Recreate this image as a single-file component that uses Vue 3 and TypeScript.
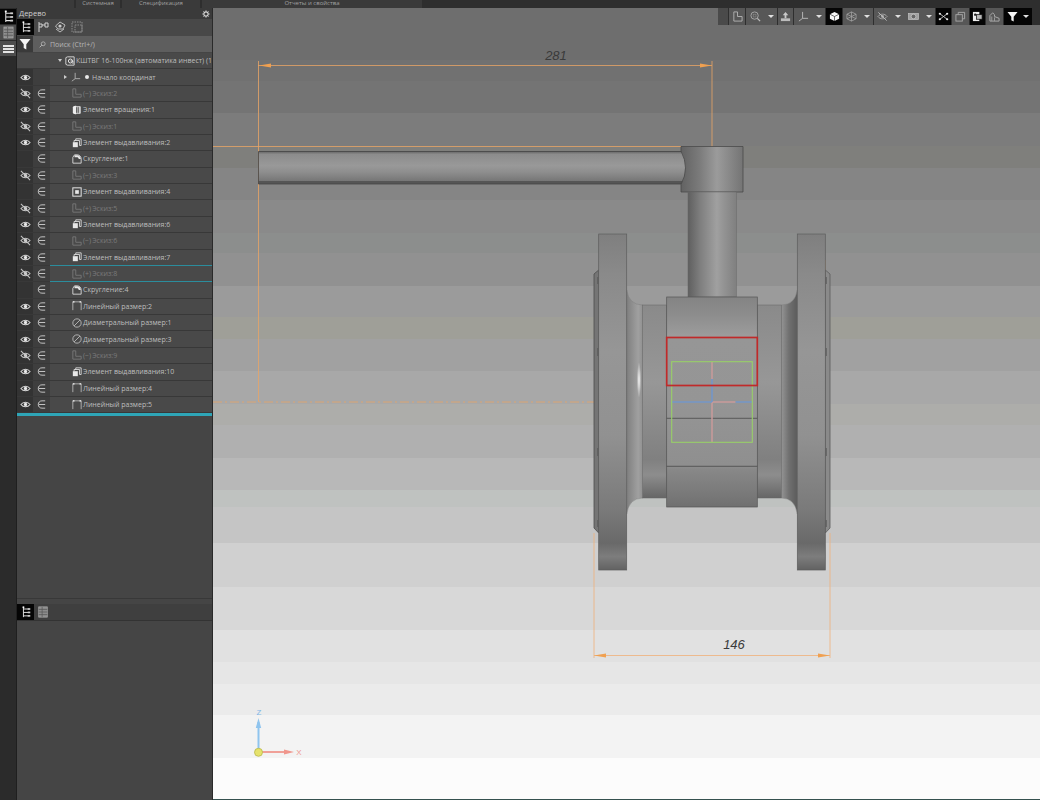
<template>
  <div class="app">
    <!-- общие иконки -->
    <svg class="defs" width="0" height="0">
      <defs>
        <symbol id="i-eye" viewBox="0 0 12 12">
          <path d="M1 6c2.5-3.4 7.500-3.400 10 0c-2.500 3.400-7.500 3.400-10 0z" fill="none" stroke="#d8d8d8" stroke-width="1.1" />
          <circle cx="6" cy="6" r="1.8" fill="#e8e8e8" />
        </symbol>
        <symbol id="i-hidden" viewBox="0 0 12 12">
          <path d="M1 6c2.5-3.4 7.500-3.400 10 0c-2.500 3.400-7.500 3.400-10 0z" fill="none" stroke="#c8c8c8" stroke-width="1.1" />
          <circle cx="6" cy="6" r="1.8" fill="#d0d0d0" />
          <path d="M1 1l10 10" stroke="#c8c8c8" stroke-width="1.1" />
        </symbol>
        <symbol id="i-elem" viewBox="0 0 12 12">
          <path d="M10 2H6.5C4 2 2.5 3.800 2.5 6s1.500 4 4 4H10M3 6h7" fill="none" stroke="#cfcfcf" stroke-width="1" />
        </symbol>
        <symbol id="i-sketch" viewBox="0 0 12 12">
          <path d="M1 1h3.5v6.500H11V11H1z" fill="none" stroke="#7c7c7c" stroke-width="1" />
        </symbol>
        <symbol id="i-extrude" viewBox="0 0 12 12">
          <path d="M4.5 3V1h6.500v8H9" fill="none" stroke="#e4e4e4" stroke-width="1" />
          <path d="M2.5 5V3h6.500v6" fill="none" stroke="#e4e4e4" stroke-width="1" />
          <rect x="1" y="5" width="6" height="6" fill="#e8e8e8" />
        </symbol>
        <symbol id="i-extrude-in" viewBox="0 0 12 12">
          <rect x="1" y="1" width="10" height="10" fill="none" stroke="#e4e4e4" stroke-width="1.2" />
          <rect x="3.8" y="3.8" width="4.4" height="4.4" fill="#e8e8e8" />
        </symbol>
        <symbol id="i-rotate" viewBox="0 0 12 12">
          <path d="M2 2h8v8H2z" fill="none" stroke="#e4e4e4" stroke-width="1" />
          <path d="M1 3c1-2 3-2 4-2v10c-1 0-3 0-4-2z" fill="#eee" />
          <path d="M7 2v8M9 2v8" stroke="#e4e4e4" stroke-width="1" />
        </symbol>
        <symbol id="i-round" viewBox="0 0 12 12">
          <path d="M1 11V4l2-3h3c3 0 5 2 5 5v5z" fill="none" stroke="#e4e4e4" stroke-width="1" />
          <path d="M3 1.5h3c2.500 0 4.500 2 4.500 4.500H8C8 4.800 7 4 6 4H3z" fill="#e8e8e8" />
        </symbol>
        <symbol id="i-linear" viewBox="0 0 12 12">
          <path d="M1 11V1h10v10" fill="none" stroke="#bdbdbd" stroke-width="1" />
          <path d="M1 1h2M9 1h2" stroke="#f0f0f0" stroke-width="1.6" />
        </symbol>
        <symbol id="i-diam" viewBox="0 0 12 12">
          <circle cx="6" cy="6" r="5" fill="none" stroke="#c4c4c4" stroke-width="1" />
          <path d="M2.5 9.5l7-7" stroke="#c4c4c4" stroke-width="1" />
        </symbol>
        <symbol id="i-model" viewBox="0 0 12 12">
          <path d="M1 2l2-1h8v10H3l-2-1z" fill="none" stroke="#e8e8e8" stroke-width="1" />
          <circle cx="6.5" cy="6" r="2.4" fill="none" stroke="#e8e8e8" stroke-width="1.2" />
          <path d="M6.5 6h3v3.500" fill="none" stroke="#e8e8e8" stroke-width="1" />
        </symbol>
        <symbol id="i-axes" viewBox="0 0 12 12">
          <path d="M5 1v7M5 8h6M5 8l-4 3" fill="none" stroke="#bbb" stroke-width="1" />
        </symbol>
        <symbol id="i-tree" viewBox="0 0 12 14">
          <path d="M3 1v12M3 3.5h6M3 7.5h6M3 11.5h6" fill="none" stroke="#e4e4e4" stroke-width="1.1" />
          <rect x="2" y="0.5" width="2" height="2" fill="#fff" />
          <rect x="8" y="2.5" width="3" height="2" fill="#ccc" />
          <rect x="8" y="6.5" width="3" height="2" fill="#ccc" />
          <rect x="8" y="10.5" width="3" height="2" fill="#ccc" />
        </symbol>
        <symbol id="i-table" viewBox="0 0 12 14">
          <rect x="1" y="1" width="10" height="12" fill="#8b8b8b" stroke="#aaa" stroke-width="0.8" />
          <path d="M1 4h10M1 7h10M1 10h10M5 1v12" stroke="#555" stroke-width="0.8" />
        </symbol>
        <symbol id="i-parts" viewBox="0 0 12 12">
          <path d="M2 1v10M2 3h3v3H2M8 2h3v4H8zM5 4h3" fill="none" stroke="#cfcfcf" stroke-width="1" />
        </symbol>
        <symbol id="i-layers" viewBox="0 0 12 12">
          <path d="M6 1l5 3-2 4H4L1.5 5zM2 8l4 3 4-3" fill="none" stroke="#bbb" stroke-width="1" />
          <circle cx="6" cy="5" r="1.6" fill="#ccc" />
        </symbol>
        <symbol id="i-dots" viewBox="0 0 12 12">
          <rect x="1" y="1" width="10" height="10" fill="none" stroke="#8a8a8a" stroke-width="1" stroke-dasharray="1.5 1" />
          <rect x="4" y="4" width="7" height="7" fill="none" stroke="#8a8a8a" stroke-width="1" stroke-dasharray="1.5 1" />
        </symbol>
        <symbol id="i-filter" viewBox="0 0 12 12">
          <path d="M0.5 1h11L7.3 6.200V11.500L4.700 10V6.200z" fill="#f4f4f4" />
        </symbol>
        <symbol id="i-corner" viewBox="0 0 12 12">
          <path d="M2 1h4v5h5v5H2z" fill="none" stroke="#b4b4b4" stroke-width="1" />
        </symbol>
        <symbol id="i-zoom" viewBox="0 0 12 12">
          <circle cx="5" cy="5" r="4" fill="none" stroke="#aaa" stroke-width="1" />
          <path d="M8 8l3 3" stroke="#bbb" stroke-width="1.4" />
          <rect x="3.5" y="3.5" width="3" height="3" fill="none" stroke="#888" stroke-width="0.7" />
        </symbol>
        <symbol id="i-orient" viewBox="0 0 12 12">
          <path d="M6 1l3 3.500H7V8H5V4.500H3z" fill="#c8c8c8" />
          <rect x="1" y="8" width="10" height="3" fill="#bcbcbc" />
        </symbol>
        <symbol id="i-cube" viewBox="0 0 12 12">
          <path d="M6 1l5 2.500v5L6 11 1 8.500v-5z" fill="#f6f6f6" />
          <path d="M1 3.5L6 6l5-2.500M6 6v5" fill="none" stroke="#222" stroke-width="0.7" />
        </symbol>
        <symbol id="i-cube-wire" viewBox="0 0 12 12">
          <path d="M6 1l5 2.500v5L6 11 1 8.500v-5zM1 3.500L6 6l5-2.500M6 6v5M1 8.500L6 6l5 2.500M6 1v5" fill="none" stroke="#a8a8a8" stroke-width="0.8" />
        </symbol>
        <symbol id="i-show" viewBox="0 0 12 12">
          <path d="M1 6c2.5-3.4 7.500-3.400 10 0c-2.500 3.400-7.500 3.400-10 0z" fill="none" stroke="#aaa" stroke-width="1" />
          <circle cx="6" cy="6" r="1.6" fill="#aaa" />
          <path d="M1.5 1.5l9 9" stroke="#bbb" stroke-width="1" />
        </symbol>
        <symbol id="i-section" viewBox="0 0 14 12">
          <rect x="0.5" y="2" width="13" height="8" fill="#a0a0a0" stroke="#c4c4c4" stroke-width="0.8" />
          <circle cx="7" cy="6" r="3" fill="#666" stroke="#d0d0d0" stroke-width="0.8" />
        </symbol>
        <symbol id="i-cross" viewBox="0 0 12 12">
          <path d="M2 3l8 6M10 3l-8 6" stroke="#ddd" stroke-width="0.9" />
          <circle cx="2" cy="3" r="1.2" fill="#eee" />
          <circle cx="10" cy="3" r="1.2" fill="#eee" />
          <circle cx="2" cy="9" r="1.2" fill="#eee" />
          <circle cx="10" cy="9" r="1.2" fill="#eee" />
        </symbol>
        <symbol id="i-frames" viewBox="0 0 12 12">
          <rect x="1" y="4" width="7" height="7" fill="none" stroke="#a8a8a8" stroke-width="1" />
          <path d="M3.5 4V1.500h7v7H8" fill="none" stroke="#a8a8a8" stroke-width="1" />
        </symbol>
        <symbol id="i-mix" viewBox="0 0 12 12">
          <rect x="1" y="1" width="7" height="10" fill="#eee" />
          <rect x="5" y="4" width="6" height="5" fill="#bbb" stroke="#111" stroke-width="0.8" />
          <circle cx="3.5" cy="4" r="1.3" fill="#222" />
        </symbol>
        <symbol id="i-stack" viewBox="0 0 12 12">
          <path d="M1 11V5l3-3 2 2v2l5 2v3z" fill="none" stroke="#b0b0b0" stroke-width="1" />
          <path d="M3 11V6M6 11V7" stroke="#a0a0a0" stroke-width="1" />
        </symbol>
      </defs>
    </svg>

    <header class="topbar">
      <div v-for="tab in topTabs" :key="tab.label" class="top-tab" :style="{ width: tab.width + 'px' }">
        {{ tab.label }}
      </div>
    </header>

    <div class="main">
      <nav class="rail">
        <div class="rail-btn active"><svg class="ic-rail"><use href="#i-tree" /></svg></div>
        <div class="rail-btn"><svg class="ic-rail"><use href="#i-table" /></svg></div>
        <div class="rail-btn">
          <span class="burger"></span><span class="burger"></span><span class="burger"></span>
        </div>
      </nav>

      <aside class="panel">
        <div class="panel-head">
          <span>Дерево</span>
          <svg class="gear" viewBox="0 0 12 12">
            <circle cx="6" cy="6" r="3.2" fill="none" stroke="#d8d8d8" stroke-width="1.6" />
            <path d="M6 0.5v2M6 9.5v2M0.5 6h2M9.500 6h2M2.100 2.100l1.400 1.400M8.500 8.500l1.400 1.400M2.100 9.900l1.400-1.400M8.500 3.500l1.400-1.400" stroke="#d8d8d8" stroke-width="1.3" />
          </svg>
        </div>
        <div class="tool-row">
          <div class="tool active"><svg class="ic-tool"><use href="#i-tree" /></svg></div>
          <div class="tool"><svg class="ic-tool"><use href="#i-parts" /></svg></div>
          <div class="tool"><svg class="ic-tool"><use href="#i-layers" /></svg></div>
          <div class="tool"><svg class="ic-tool"><use href="#i-dots" /></svg></div>
        </div>
        <div class="search-row">
          <div class="filter"><svg class="ic-tool"><use href="#i-filter" /></svg></div>
          <div class="search">
            <svg class="lens" viewBox="0 0 10 10">
              <circle cx="6" cy="4" r="2.8" fill="none" stroke="#c4c4c4" stroke-width="1" />
              <path d="M4 6L1 9" stroke="#c4c4c4" stroke-width="1.2" />
            </svg>
            Поиск (Ctrl+/)
          </div>
        </div>

        <div class="tree">
          <div
            v-for="row in rows"
            :key="row.label"
            class="row"
            :class="{ teal: row.teal }"
          >
            <div class="cell-eye">
              <svg v-if="row.eye" class="ic-sm"><use :href="'#i-' + row.eye" /></svg>
            </div>
            <div class="cell-elem">
              <svg v-if="row.elem" class="ic-sm"><use href="#i-elem" /></svg>
            </div>
            <div class="cell-name" :style="{ paddingLeft: row.indent + 'px' }">
              <span v-if="row.arrow" class="arrow" :class="row.arrow"></span>
              <svg class="ic-row"><use :href="'#i-' + row.icon" /></svg>
              <span v-if="row.dot" class="dot"></span>
              <span v-if="row.sign" class="sign">{{ row.sign }}</span>
              <span class="name" :class="{ dim: row.icon === 'sketch' }">{{ row.label }}</span>
            </div>
          </div>
        </div>
        <div class="tree-end"></div>

        <div class="tree-free"></div>
        <div class="bottom-tabs">
          <div class="tool active"><svg class="ic-tool"><use href="#i-tree" /></svg></div>
          <div class="tool"><svg class="ic-tool"><use href="#i-table" /></svg></div>
        </div>
        <div class="bottom-free"></div>
      </aside>

      <section class="viewport">
        <svg class="scene" viewBox="213 8 827 792" preserveAspectRatio="none">
          <defs>
            <linearGradient id="g-body" gradientUnits="userSpaceOnUse" x1="0" y1="297" x2="0" y2="507">
              <stop offset="0" stop-color="#848484" />
              <stop offset="0.08" stop-color="#8c8c8c" />
              <stop offset="0.19" stop-color="#9d9d9d" />
              <stop offset="0.2" stop-color="#969696" />
              <stop offset="0.5" stop-color="#959595" />
              <stop offset="0.8" stop-color="#8f8f8f" />
              <stop offset="0.82" stop-color="#888" />
              <stop offset="0.93" stop-color="#7a7a7a" />
              <stop offset="1" stop-color="#707070" />
            </linearGradient>
            <linearGradient id="g-flange" gradientUnits="userSpaceOnUse" x1="0" y1="234" x2="0" y2="570">
              <stop offset="0" stop-color="#7f7f7f" />
              <stop offset="0.12" stop-color="#8a8a8a" />
              <stop offset="0.35" stop-color="#969696" />
              <stop offset="0.6" stop-color="#919191" />
              <stop offset="0.82" stop-color="#7a7a7a" />
              <stop offset="0.92" stop-color="#696969" />
              <stop offset="0.96" stop-color="#7d7d7d" />
              <stop offset="1" stop-color="#626262" />
            </linearGradient>
            <linearGradient id="g-neck" gradientUnits="userSpaceOnUse" x1="0" y1="305" x2="0" y2="498">
              <stop offset="0" stop-color="#8a8a8a" />
              <stop offset="0.4" stop-color="#979797" />
              <stop offset="0.8" stop-color="#808080" />
              <stop offset="0.88" stop-color="#8d8d8d" />
              <stop offset="1" stop-color="#666" />
            </linearGradient>
            <linearGradient id="g-cone-l" gradientUnits="userSpaceOnUse" x1="627" y1="0" x2="643" y2="0">
              <stop offset="0" stop-color="#808080" />
              <stop offset="0.7" stop-color="#a0a0a0" />
              <stop offset="1" stop-color="#8f8f8f" />
            </linearGradient>
            <linearGradient id="g-cone-r" gradientUnits="userSpaceOnUse" x1="781" y1="0" x2="797" y2="0">
              <stop offset="0" stop-color="#969696" />
              <stop offset="0.5" stop-color="#707070" />
              <stop offset="1" stop-color="#5c5c5c" />
            </linearGradient>
            <linearGradient id="g-stem" gradientUnits="userSpaceOnUse" x1="688" y1="0" x2="736" y2="0">
              <stop offset="0" stop-color="#5f5f5f" />
              <stop offset="0.25" stop-color="#7e7e7e" />
              <stop offset="0.6" stop-color="#a0a0a0" />
              <stop offset="0.75" stop-color="#939393" />
              <stop offset="1" stop-color="#808080" />
            </linearGradient>
            <linearGradient id="g-head" gradientUnits="userSpaceOnUse" x1="681" y1="0" x2="743" y2="0">
              <stop offset="0" stop-color="#626262" />
              <stop offset="0.3" stop-color="#7b7b7b" />
              <stop offset="0.58" stop-color="#9b9b9b" />
              <stop offset="0.72" stop-color="#8e8e8e" />
              <stop offset="1" stop-color="#747474" />
            </linearGradient>
            <linearGradient id="g-handle" gradientUnits="userSpaceOnUse" x1="0" y1="151" x2="0" y2="184">
              <stop offset="0" stop-color="#5f5f5f" />
              <stop offset="0.1" stop-color="#8c8c8c" />
              <stop offset="0.45" stop-color="#999" />
              <stop offset="0.65" stop-color="#8d8d8d" />
              <stop offset="0.9" stop-color="#777" />
              <stop offset="0.92" stop-color="#555" />
              <stop offset="1" stop-color="#555" />
            </linearGradient>
            <radialGradient id="g-shine">
              <stop offset="0" stop-color="#f6f6f6" />
              <stop offset="1" stop-color="#f6f6f6" stop-opacity="0" />
            </radialGradient>
          </defs>

          <!-- фон полосами -->
          <rect
            v-for="band in bands"
            :key="band.y"
            x="213"
            :y="band.y"
            width="827"
            :height="band.h"
            :fill="band.color"
          />

          <!-- размеры -->
          <g class="dim">
            <path d="M213 146.5H681M258.500 61V402M712 61V147M258 65.500H712M825 260V293" />
            <path class="dim-pale" d="M594 533V658M830 533V658M594 655.500H830" />
            <path d="M213 402H594" stroke-dasharray="9 3 2 3" />
            <path class="arrowhead" d="M259 65.500l12-2v4zM712 65.500l-12-2v4zM594 655.500l12-2v4zM830 655.500l-12-2v4z" />
          </g>

          <!-- рукоятка -->
          <path d="M258.5 151.5H684L686.500 167 684 184H258.500z" fill="url(#g-handle)" stroke="#444" stroke-width="0.8" />
          <path d="M681 146.5H743V192H681V184.500Q690 168 681 151z" fill="url(#g-head)" stroke="#4a4a4a" stroke-width="0.8" />
          <rect x="688" y="192" width="48.3" height="105" fill="url(#g-stem)" stroke="#666" stroke-width="0.5" />

          <!-- корпус -->
          <path d="M594 274L598.7 270V533L594 528z" fill="#757575" stroke="#4c4c4c" stroke-width="0.8" />
          <path d="M830 274L825.3 270V533L830 528z" fill="#8a8a8a" stroke="#5c5c5c" stroke-width="0.8" />
          <path d="M626.7 290Q629 305 642.700 305V498Q629 498 626.700 514z" fill="url(#g-cone-l)" stroke="#777" stroke-width="0.4" />
          <path d="M797.3 290Q795 305 781.300 305V498Q795 498 797.300 514z" fill="url(#g-cone-r)" stroke="#777" stroke-width="0.4" />
          <rect x="642.7" y="305" width="24" height="193" fill="url(#g-neck)" stroke="#666" stroke-width="0.5" />
          <rect x="757.3" y="305" width="24" height="193" fill="url(#g-neck)" stroke="#666" stroke-width="0.5" />
          <ellipse cx="639" cy="380" rx="2.2" ry="18" fill="url(#g-shine)" />
          <rect x="598.7" y="234" width="28" height="336" fill="url(#g-flange)" stroke="#5c5c5c" stroke-width="0.7" />
          <rect x="797.3" y="234" width="28" height="336" fill="url(#g-flange)" stroke="#5c5c5c" stroke-width="0.7" />
          <rect x="666.7" y="297" width="90.6" height="210" fill="url(#g-body)" stroke="#555" stroke-width="0.7" />
          <path d="M666.7 418.3H757.300M666.700 466.300H757.300" stroke="#4a4a4a" stroke-width="0.8" />
          <path
            d="M597.7 277v7M597.700 348v8M597.700 448v8M597.700 520v7M826.300 277v7M826.300 348v8M826.300 448v8M826.300 520v7"
            stroke="#555"
            stroke-width="0.8"
          />

          <!-- система координат в центре -->
          <path d="M712 362V379M712 402V442M712 402H735.600" stroke="#c99a9a" stroke-width="1.5" fill="none" />
          <path d="M672 402H712M735.6 402H752M712 379V402" stroke="#7496c8" stroke-width="1.6" fill="none" />
          <rect x="671.7" y="361.7" width="80.6" height="80.6" fill="none" stroke="#98cf68" stroke-width="1.1" />
          <rect x="666.7" y="337.5" width="90.6" height="48" fill="none" stroke="#c02a2a" stroke-width="1.7" />

          <text x="556" y="60" class="dim-text" text-anchor="middle">281</text>
          <text x="734" y="649" class="dim-text" text-anchor="middle">146</text>

          <!-- оси -->
          <path d="M258.5 752V722" stroke="#8fc4ee" stroke-width="2" />
          <path d="M258.5 718l-2.7 10h5.400z" fill="#8fc4ee" />
          <path d="M262 752H284" stroke="#f0a098" stroke-width="2" />
          <path d="M294 752l-10-2.500v5z" fill="#f0968c" />
          <circle cx="258.5" cy="752.3" r="4" fill="#e6e26c" stroke="#b8b84a" stroke-width="0.8" />
          <text x="259" y="715" class="axis-z" text-anchor="middle">Z</text>
          <text x="299" y="755" class="axis-x" text-anchor="middle">X</text>
        </svg>

        <div class="view-bar">
          <div
            v-for="(btn, i) in viewButtons"
            :key="i"
            class="view-btn"
            :class="{ black: btn.black, grip: btn.grip }"
            :style="{ width: btn.width + 'px' }"
          >
            <template v-for="(icon, k) in btn.icons" :key="k">
              <svg class="ic"><use :href="'#i-' + icon" /></svg>
              <span v-if="btn.caret" class="caret"></span>
            </template>
          </div>
        </div>
        <div class="view-edge"></div>
      </section>
    </div>
  </div>
</template>

<script setup lang="ts">
interface TreeRow {
  label: string;
  icon: string;
  eye?: "eye" | "hidden";
  elem?: boolean;
  indent: number;
  arrow?: string;
  dot?: boolean;
  sign?: string;
  teal?: boolean;
}

interface ViewButton {
  width: number;
  icons: string[];
  black?: boolean;
  caret?: boolean;
  grip?: boolean;
}

const topTabs = [
  { label: "", width: 74 },
  { label: "Системная", width: 44 },
  { label: "Спецификация", width: 78 },
  { label: "Отчеты и свойства", width: 220 },
];

function feature(label: string, icon: string, eye: "eye" | "hidden" | undefined, sign?: string): TreeRow {
  return { label, icon, eye, elem: true, indent: 22, sign };
}

const rows: TreeRow[] = [
  { label: "КШТВГ 16-100нж (автоматика инвест) (1", icon: "model", indent: 8, arrow: "down" },
  { label: "Начало координат", icon: "axes", eye: "eye", indent: 14, arrow: "right", dot: true },
  feature("Эскиз:2", "sketch", "hidden", "(−)"),
  feature("Элемент вращения:1", "rotate", "eye"),
  feature("Эскиз:1", "sketch", "hidden", "(−)"),
  feature("Элемент выдавливания:2", "extrude", "eye"),
  feature("Скругление:1", "round", undefined),
  feature("Эскиз:3", "sketch", "hidden", "(−)"),
  feature("Элемент выдавливания:4", "extrude-in", undefined),
  feature("Эскиз:5", "sketch", "hidden", "(+)"),
  feature("Элемент выдавливания:6", "extrude", "eye"),
  feature("Эскиз:6", "sketch", "hidden", "(−)"),
  feature("Элемент выдавливания:7", "extrude", "eye"),
  { ...feature("Эскиз:8", "sketch", "hidden", "(+)"), teal: true },
  feature("Скругление:4", "round", undefined),
  feature("Линейный размер:2", "linear", "eye"),
  feature("Диаметральный размер:1", "diam", "eye"),
  feature("Диаметральный размер:3", "diam", "eye"),
  feature("Эскиз:9", "sketch", "hidden", "(−)"),
  feature("Элемент выдавливания:10", "extrude", "eye"),
  feature("Линейный размер:4", "linear", "eye"),
  feature("Линейный размер:5", "linear", "eye"),
];

// полосы фона: [начало, цвет]
const bandStops: [number, string][] = [
  [8, "#6e6e6e"],
  [60, "#717171"],
  [81, "#747474"],
  [113, "#7c7c7c"],
  [146, "#7f7f7c"],
  [168, "#858585"],
  [200, "#8a8a8a"],
  [233, "#8c8e8d"],
  [253, "#919191"],
  [286, "#9b9b9b"],
  [317, "#9f9f98"],
  [339, "#a1a1a1"],
  [371, "#a8a8a8"],
  [404, "#adadaa"],
  [425, "#b0b0b0"],
  [458, "#b8b8b8"],
  [490, "#bfc2c0"],
  [507, "#c5c5c5"],
  [543, "#d0d0d0"],
  [587, "#d8d8d8"],
  [630, "#e1e1e1"],
  [662, "#e6e6e6"],
  [684, "#ebebeb"],
  [715, "#f3f3f3"],
  [758, "#fcfcfc"],
];

const bands = bandStops.map(([y, color], i) => ({
  y,
  color,
  h: (bandStops[i + 1]?.[0] ?? 800) - y,
}));

const viewButtons: ViewButton[] = [
  { width: 10, icons: [], grip: true },
  { width: 16, icons: ["corner"] },
  { width: 31, icons: ["zoom"], caret: true },
  { width: 15, icons: ["orient"] },
  { width: 31, icons: ["axes"], caret: true },
  { width: 16, icons: ["cube"], black: true },
  { width: 30, icons: ["cube-wire"], caret: true },
  { width: 61, icons: ["show", "section"], caret: true },
  { width: 15, icons: ["cross"], black: true },
  { width: 17, icons: ["frames"] },
  { width: 15, icons: ["mix"], black: true },
  { width: 17, icons: ["stack"] },
  { width: 28, icons: ["filter"], black: true, caret: true },
];
</script>

<style scoped>
.defs {
  position: absolute;
}
.app {
  width: 1040px;
  height: 800px;
  display: flex;
  flex-direction: column;
  overflow: hidden;
  font-family: "Open Sans", "Noto Sans", "Noto Sans CJK SC", sans-serif;
  font-size: 7px;
  color: #bebebe;
  background: #444;
}

/* верхняя полоса */
.topbar {
  height: 8px;
  flex: none;
  display: flex;
  gap: 2px;
  background: #2e2e2e;
  overflow: hidden;
  position: relative;
  z-index: 2;
}
.top-tab {
  height: 8px;
  line-height: 7px;
  font-size: 6px;
  text-align: center;
  color: #a0a0a0;
  background: #3a3a3a;
  white-space: nowrap;
  overflow: hidden;
}

.main {
  flex: 1;
  display: flex;
  min-height: 0;
}

/* левая узкая панель */
.rail {
  width: 16px;
  flex: none;
  display: flex;
  flex-direction: column;
  gap: 1px;
  padding-top: 1px;
  background: #2b2b2b;
  border-right: 1px solid #1f1f1f;
}
.rail-btn {
  height: 15px;
  display: flex;
  flex-direction: column;
  align-items: center;
  justify-content: center;
  gap: 1px;
  background: #4d4d4d;
}
.rail-btn.active {
  background: #050505;
}
.ic-rail {
  width: 11px;
  height: 13px;
}
.burger {
  width: 11px;
  height: 2px;
  background: #e4e4e4;
}

/* панель дерева */
.panel {
  width: 195px;
  flex: none;
  display: flex;
  flex-direction: column;
  background: #454545;
  border-right: 1px solid #2a2a2a;
}
.panel-head {
  height: 11px;
  flex: none;
  padding: 0 2px;
  display: flex;
  align-items: center;
  justify-content: space-between;
  line-height: 11px;
  font-size: 7.5px;
  color: #cfcfcf;
  background: #3a3a3a;
}
.gear {
  width: 8px;
  height: 8px;
}
.tool-row {
  height: 17px;
  flex: none;
  display: flex;
  background: #484848;
}
.tool {
  width: 17px;
  height: 16px;
  display: flex;
  align-items: center;
  justify-content: center;
}
.tool.active {
  background: #050505;
}
.ic {
  width: 11px;
  height: 11px;
  flex: none;
}
.ic-tool {
  width: 12px;
  height: 12px;
}
.search-row {
  height: 16px;
  flex: none;
  display: flex;
  background: #3a3a3a;
}
.filter {
  width: 16px;
  display: flex;
  align-items: center;
  justify-content: center;
}
.search {
  flex: 1;
  display: flex;
  align-items: center;
  gap: 4px;
  padding-left: 6px;
  color: #b6b6b6;
  background: #5e5e5e;
}
.lens {
  width: 7px;
  height: 7px;
}

/* строки дерева */
.tree {
  flex: none;
  padding-top: 1px;
}
.row {
  height: 16.38px;
  display: flex;
  box-sizing: border-box;
  border-bottom: 1px solid #383838;
}
.row.teal {
  position: relative;
}
.row.teal::before,
.row.teal::after {
  content: "";
  position: absolute;
  z-index: 1;
  left: 33px;
  right: 0;
  height: 1px;
  background: #2b8d9d;
}
.row.teal::before {
  top: -1px;
}
.row.teal::after {
  bottom: -1px;
}
.row:first-child .cell-eye,
.row:first-child .cell-elem {
  background: #4a4a4a;
}
.cell-eye {
  width: 16px;
  flex: none;
  display: flex;
  align-items: center;
  justify-content: center;
  background: #333;
}
.cell-elem {
  width: 17px;
  flex: none;
  display: flex;
  align-items: center;
  justify-content: center;
  background: #3e3e3e;
}
.ic-sm {
  width: 11px;
  height: 11px;
}
.cell-name {
  flex: 1;
  min-width: 0;
  display: flex;
  align-items: center;
  background: #494949;
  white-space: nowrap;
  overflow: hidden;
}
.ic-row {
  width: 10px;
  height: 10px;
  flex: none;
  margin-right: 1px;
}
.arrow {
  width: 0;
  height: 0;
  flex: none;
  margin-right: 3px;
}
.arrow.down {
  border-left: 2px solid transparent;
  border-right: 2px solid transparent;
  border-top: 3px solid #ccc;
}
.arrow.right {
  border-top: 2px solid transparent;
  border-bottom: 2px solid transparent;
  border-left: 3px solid #ccc;
  margin-right: 4px;
}
.dot {
  width: 4px;
  height: 4px;
  flex: none;
  margin: 0 3px;
  border-radius: 50%;
  background: #e8e8e8;
}
.sign {
  color: #7e7e7e;
  margin-right: 1px;
}
.name {
  color: #bebebe;
}
.name.dim {
  color: #7a7a7a;
}
.tree-end {
  height: 3px;
  flex: none;
  background: #2ea5b7;
}
.tree-free {
  flex: none;
  height: 182px;
  border-bottom: 1px solid #383838;
  background: #454545;
}
.bottom-tabs {
  height: 16px;
  flex: none;
  display: flex;
  margin-top: 5px;
  background: #3f3f3f;
  border-bottom: 1px solid #333;
}
.bottom-free {
  flex: 1;
  background: #454545;
}

/* окно модели */
.viewport {
  flex: 1;
  position: relative;
  min-width: 0;
}
.scene {
  display: block;
  width: 100%;
  height: 100%;
}
.dim {
  fill: none;
  stroke: #e9a566;
  stroke-width: 0.8;
}
.dim-pale {
  stroke: #f0b078;
}
.arrowhead {
  fill: #f0a050;
  stroke: none;
}
.dim-text {
  font-family: "Liberation Sans", sans-serif;
  font-style: italic;
  font-size: 13px;
  fill: #3a3a3a;
}
.axis-z {
  font-family: "Liberation Sans", sans-serif;
  font-size: 8px;
  fill: #7fb6e6;
}
.axis-x {
  font-family: "Liberation Sans", sans-serif;
  font-size: 8px;
  fill: #ee9a90;
}

/* панель вида поверх окна */
.view-bar {
  position: absolute;
  top: 0;
  left: 505px;
  right: 0;
  height: 17px;
  display: flex;
  gap: 1px;
  padding-right: 5px;
  background: #2e2e2e;
}
.view-btn {
  height: 17px;
  flex: none;
  display: flex;
  align-items: center;
  justify-content: space-around;
  background: #575757;
}
.view-btn.black {
  background: #050505;
}
.view-btn.grip {
  background: #4a4a4a;
}
.caret {
  width: 0;
  height: 0;
  border-left: 3px solid transparent;
  border-right: 3px solid transparent;
  border-top: 3px solid #e0e0e0;
}
.view-edge {
  position: absolute;
  left: 0;
  right: 0;
  bottom: 0;
  height: 1px;
  background: #35514f;
}
</style>
